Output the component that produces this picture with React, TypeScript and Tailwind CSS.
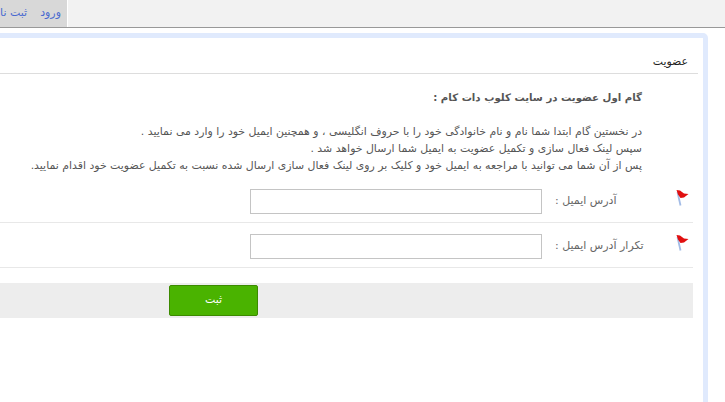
function Flag() {
  return (
    <svg width="16" height="17" viewBox="0 0 16 17" className="block">
      <path d="M1.5 2 L4.5 15.5" stroke="#a3bce6" strokeWidth="1.8" fill="none" />
      <path d="M0.5 0 L4 0.5 L8 3.5 L12.5 4 L8 7.5 L4.5 8 L2 4.5 Z" fill="#e10f0f" />
    </svg>
  )
}

function FieldRow({ label }: { label: string }) {
  return (
    <div className="mr-[5px] flex h-[45px] items-center border-b border-[#e8e8e8] pr-[1px]">
      <div className="w-[16px] shrink-0 self-start pt-[12px]">
        <Flag />
      </div>
      <div className="mt-[2px] w-[121px] shrink-0 text-left text-[11px] text-[#666]">{label}</div>
      <input className="mr-[13px] mt-[3px] h-[25px] w-[292px] shrink-0 border border-[#c4c4c4] bg-white" />
    </div>
  )
}

export default function App() {
  return (
    <div dir="rtl" className="h-[402px] w-[725px] overflow-hidden bg-white font-['DejaVu_Sans',sans-serif]">
      {/* Top tabs */}
      <div className="flex h-[28px] border-b border-[#999] bg-[#f2f2f2]" dir="ltr">
        <div dir="rtl" className="flex h-[27px] w-[68px] shrink-0 items-center justify-start gap-[13px] overflow-hidden border-r border-white bg-[#d8d8d8] pr-[6px] text-[11px] text-[#4a6ad0]">
          <span className="shrink-0">ورود</span>
          <span className="shrink-0">ثبت نام</span>
        </div>
      </div>

      {/* Panel */}
      <div className="mr-[17px] mt-[5px] h-[400px] w-[900px] rounded-tr-[5px] border-[5px] border-[#e0eafd] bg-white pr-[5px]">
        <div className="flex h-[36px] items-end border-b border-[#ddd] pb-[3px] pr-[10px] text-[10.9px] text-[#222]">
          عضویت
        </div>
        <div className="pr-[56px]">
          <h2 className="mt-[16px] text-[10.2px] font-bold leading-[16px] text-[#555]">
            گام اول عضویت در سایت کلوب دات کام :
          </h2>
          <div className="mt-[17px] text-[10.9px] leading-[17px] text-[#555]">
            <p>در نخستین گام ابتدا شما نام و نام خانوادگی خود را با حروف انگلیسی ، و همچنین ایمیل خود را وارد می نمایید .</p>
            <p>سپس لینک فعال سازی و تکمیل عضویت به ایمیل شما ارسال خواهد شد .</p>
            <p>پس از آن شما می توانید با مراجعه به ایمیل خود و کلیک بر روی لینک فعال سازی ارسال شده نسبت به تکمیل عضویت خود اقدام نمایید.</p>
          </div>
        </div>
        <div className="mt-[4px]">
          <FieldRow label="آدرس ایمیل :" />
          <FieldRow label="تکرار آدرس ایمیل :" />
        </div>
        <div className="mr-[5px] mt-[15px] flex h-[35px] items-center bg-[#ededed] pr-[435px]">
          <button className="h-[31px] w-[89px] rounded-[2px] border border-[#3c8a00] bg-[#4ab300] text-[11px] text-white">
            ثبت
          </button>
        </div>
      </div>
    </div>
  )
}
